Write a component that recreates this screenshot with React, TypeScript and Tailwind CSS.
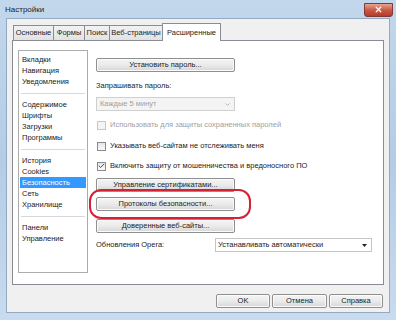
import { Check, ChevronDown, X } from "lucide-react";

const sections = [
  ["Вкладки", "Навигация", "Уведомления"],
  ["Содержимое", "Шрифты", "Загрузки", "Программы"],
  ["История", "Cookies", "Безопасность", "Сеть", "Хранилище"],
  ["Панели", "Управление"],
];

const tabs = [
  { label: "Основные", w: "w-[40px]" },
  { label: "Формы", w: "w-[31px]" },
  { label: "Поиск", w: "w-[25px]" },
  { label: "Веб-страницы", w: "w-[53px]" },
];

const Button = ({ label, className = "" }: { label: string; className?: string }) => (
  <div
    className={`h-[14px] flex items-center justify-center rounded-[2px] border border-[#8e8f8f] bg-gradient-to-b from-[#f4f4f4] via-[#ebebeb] to-[#d6d6d6] text-[7.5px] text-[#222] shadow-[inset_0_0_0_1px_#fbfbfb] ${className}`}
  >
    {label}
  </div>
);

const CheckRow = ({ label, checked = false, disabled = false }: { label: string; checked?: boolean; disabled?: boolean }) => (
  <div className="h-[12px] flex items-center gap-[4px]">
    <div
      className={`w-[9px] h-[9px] flex items-center justify-center border ${
        disabled ? "border-[#c8c8c8] bg-[#f4f4f4]" : "border-[#8a8a8a] bg-gradient-to-b from-[#e6e6e6] to-[#fafafa]"
      }`}
    >
      {checked && <Check size={8} strokeWidth={3} className="text-[#2a3a5a]" />}
    </div>
    <span className={`text-[7.5px] ${disabled ? "text-[#a0a0a0]" : "text-[#222]"}`}>{label}</span>
  </div>
);

export default function App() {
  return (
    <div
      className="w-[396px] h-[320px] flex flex-col px-[6px] pb-[7px] bg-gradient-to-b from-[#c2d7ec] via-[#b4cce6] to-[#c8dbef] overflow-hidden"
      style={{ fontFamily: '"Liberation Sans", Arial, sans-serif' }}
    >
      {/* Title bar */}
      <div className="h-[18px] flex items-center justify-between">
        <span className="text-[8px] text-[#1e1e1e] -ml-[1px] mt-[1px]">Настройки</span>
        <div className="w-[29px] h-[14px] mt-[1px] -mr-[3px] rounded-b-[3px] border border-[#7d3a3a] bg-gradient-to-b from-[#e8a493] via-[#c85a45] to-[#b8382a] flex items-center justify-center">
          <X size={9} strokeWidth={3.5} className="text-white" />
        </div>
      </div>

      {/* Client area */}
      <div className="flex-1 flex flex-col bg-[#f0f0f0] border border-[#95a9c2] pt-[5px] px-[5px]">
        {/* Tabs */}
        <div className="h-[16px] flex items-end pl-[1px] relative z-10">
          {tabs.map((t) => (
            <div
              key={t.label}
              className={`${t.w} h-[15px] flex items-center justify-center whitespace-nowrap border border-b-0 border-r-0 border-[#898c95] bg-gradient-to-b from-[#f2f2f2] to-[#e2e2e2] text-[7.5px] text-[#222]`}
            >
              {t.label}
            </div>
          ))}
          <div className="w-[59px] h-[18px] -mb-[1px] flex items-center justify-center border border-b-0 border-[#898c95] bg-white text-[7.5px] text-[#222]">
            Расширенные
          </div>
        </div>

        {/* Tab panel */}
        <div className="h-[245px] border border-[#898c95] bg-white flex pt-[9px] pl-[5px] pb-[11px] gap-[8px]">
          {/* Sidebar */}
          <div className="w-[70px] border border-[#acacac] flex flex-col pt-[3px] px-[1px]">
            {sections.map((group, gi) => (
              <div key={gi} className="flex flex-col">
                {gi > 0 && <div className="h-px bg-[#d8d8d8] mx-[1px] mt-[6px] mb-[5px]" />}
                {group.map((item) => (
                  <div
                    key={item}
                    className={`h-[11px] flex items-center pl-[2px] text-[7.5px] ${
                      item === "Безопасность" ? "bg-[#3399ff] text-white" : "text-[#222]"
                    }`}
                  >
                    {item}
                  </div>
                ))}
              </div>
            ))}
          </div>

          {/* Content */}
          <div className="flex flex-col pt-[8px]">
            <Button label="Установить пароль..." className="w-[139px]" />
            <div className="h-[12px] mt-[8px] flex items-center text-[7.5px] text-[#222]">Запрашивать пароль:</div>
            <div className="w-[139px] h-[14px] mt-[5px] border border-[#d0d0d0] bg-[#f4f4f4] flex items-center justify-between px-[3px]">
              <span className="text-[7.5px] text-[#a0a0a0]">Каждые 5 минут</span>
              <ChevronDown size={7} strokeWidth={3} className="text-[#b0b0b0]" />
            </div>
            <div className="mt-[8px] ml-[1px]">
              <CheckRow label="Использовать для защиты сохраненных паролей" disabled />
            </div>
            <div className="mt-[9px] ml-[1px]">
              <CheckRow label="Указывать веб-сайтам не отслеживать меня" />
            </div>
            <div className="mt-[8px] ml-[1px]">
              <CheckRow label="Включить защиту от мошенничества и вредоносного ПО" checked />
            </div>
            <Button label="Управление сертификатами..." className="w-[139px] mt-[6px]" />
            <div className="relative mt-[5px]">
              <Button label="Протоколы безопасности..." className="w-[139px]" />
              <div className="absolute -left-[7px] -top-[8px] w-[162px] h-[30px] rounded-[12px] border-[2.5px] border-[#d42233]" />
            </div>
            <Button label="Доверенные веб-сайты..." className="w-[139px] mt-[8px]" />
            <div className="mt-[5px] flex items-center">
              <span className="w-[119px] text-[7.5px] text-[#222]">Обновления Opera:</span>
              <div className="w-[157px] h-[14px] border border-[#c4c4c4] bg-white flex items-center justify-between pl-[2px] pr-[4px]">
                <span className="text-[7.5px] text-[#222]">Устанавливать автоматически</span>
                <svg width="5" height="3" viewBox="0 0 5 3">
                  <path d="M0 0h5L2.5 3z" fill="#222" />
                </svg>
              </div>
            </div>
          </div>
        </div>

        {/* Bottom buttons */}
        <div className="flex justify-end gap-[2px] mt-[9px] pr-[1px]">
          <Button label="OK" className="w-[54px] h-[14px] border-[#3c7fb1] shadow-[inset_0_0_0_1px_#aee3fb]" />
          <Button label="Отмена" className="w-[55px]" />
          <Button label="Справка" className="w-[54px]" />
        </div>
      </div>
    </div>
  );
}
